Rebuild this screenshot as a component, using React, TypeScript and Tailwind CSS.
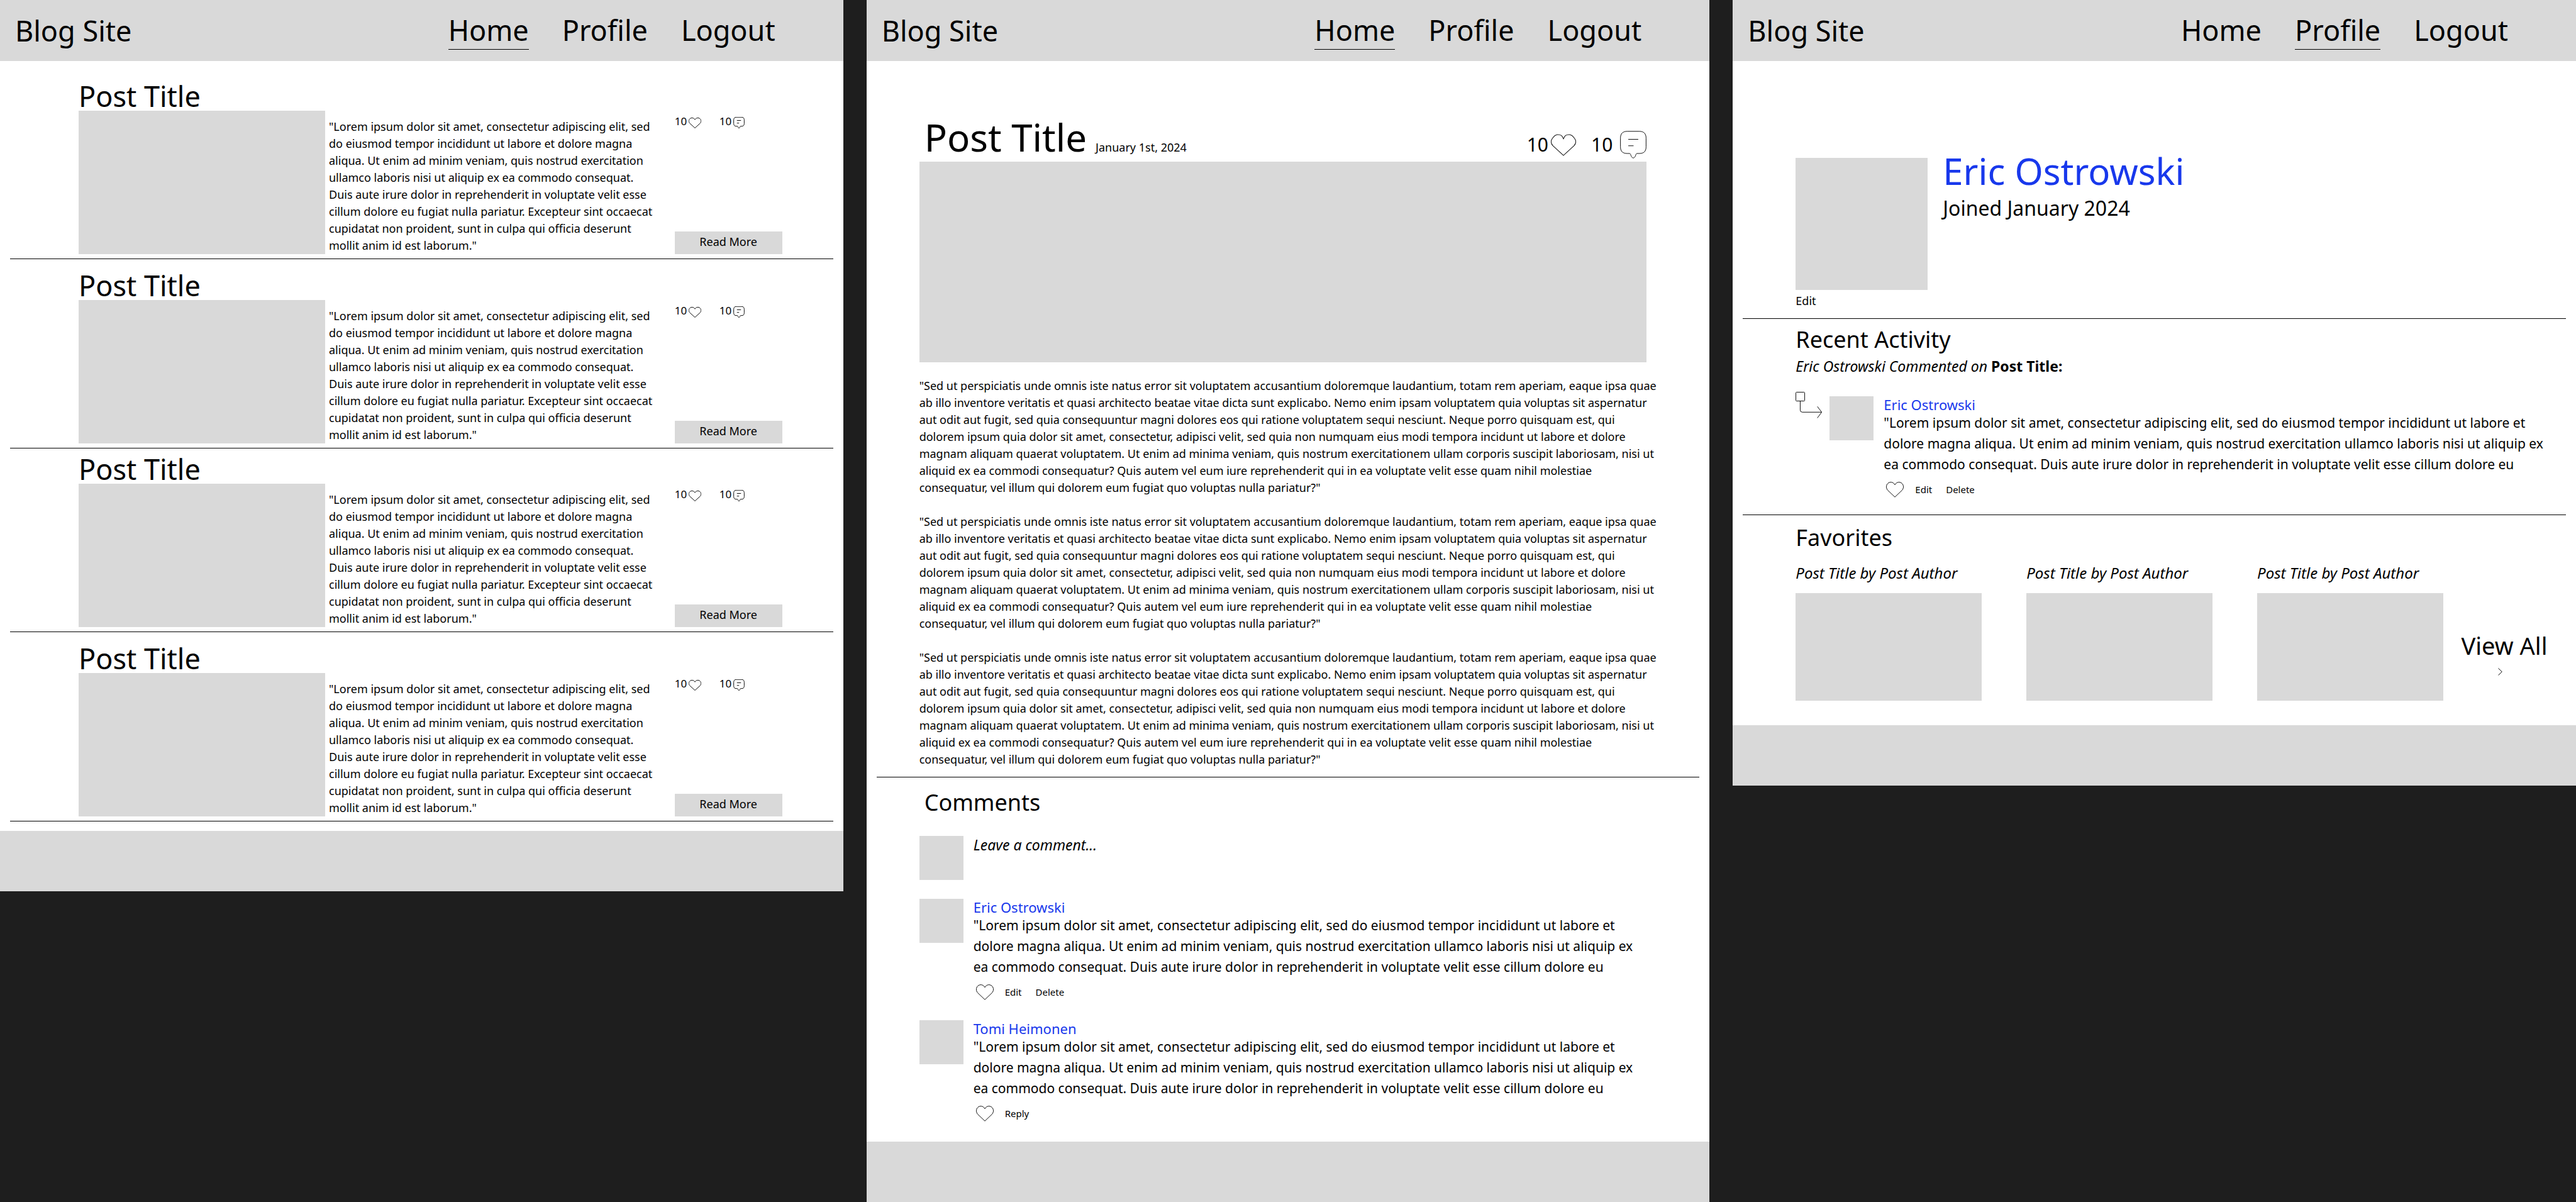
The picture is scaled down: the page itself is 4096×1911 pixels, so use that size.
import React from "react";

const EXCERPT = [
  '"Lorem ipsum dolor sit amet, consectetur adipiscing elit, sed',
  "do eiusmod tempor incididunt ut labore et dolore magna",
  "aliqua. Ut enim ad minim veniam, quis nostrud exercitation",
  "ullamco laboris nisi ut aliquip ex ea commodo consequat.",
  "Duis aute irure dolor in reprehenderit in voluptate velit esse",
  "cillum dolore eu fugiat nulla pariatur. Excepteur sint occaecat",
  "cupidatat non proident, sunt in culpa qui officia deserunt",
  'mollit anim id est laborum."',
];

const BODY = [
  '"Sed ut perspiciatis unde omnis iste natus error sit voluptatem accusantium doloremque laudantium, totam rem aperiam, eaque ipsa quae',
  "ab illo inventore veritatis et quasi architecto beatae vitae dicta sunt explicabo. Nemo enim ipsam voluptatem quia voluptas sit aspernatur",
  "aut odit aut fugit, sed quia consequuntur magni dolores eos qui ratione voluptatem sequi nesciunt. Neque porro quisquam est, qui",
  "dolorem ipsum quia dolor sit amet, consectetur, adipisci velit, sed quia non numquam eius modi tempora incidunt ut labore et dolore",
  "magnam aliquam quaerat voluptatem. Ut enim ad minima veniam, quis nostrum exercitationem ullam corporis suscipit laboriosam, nisi ut",
  "aliquid ex ea commodi consequatur? Quis autem vel eum iure reprehenderit qui in ea voluptate velit esse quam nihil molestiae",
  'consequatur, vel illum qui dolorem eum fugiat quo voluptas nulla pariatur?"',
];

const COMMENT = [
  '"Lorem ipsum dolor sit amet, consectetur adipiscing elit, sed do eiusmod tempor incididunt ut labore et',
  "dolore magna aliqua. Ut enim ad minim veniam, quis nostrud exercitation ullamco laboris nisi ut aliquip ex",
  "ea commodo consequat. Duis aute irure dolor in reprehenderit in voluptate velit esse cillum dolore eu",
];

function Lines({ lines }: { lines: string[] }) {
  return (
    <>
      {lines.map((line) => (
        <span key={line} className="block whitespace-nowrap">
          {line}
        </span>
      ))}
    </>
  );
}

const stroke = {
  fill: "none",
  stroke: "#111111",
  strokeWidth: 1,
  vectorEffect: "non-scaling-stroke" as const,
};

function Heart({ className }: { className: string }) {
  return (
    <svg viewBox="0 0 30 27" className={className} preserveAspectRatio="none" aria-hidden="true">
      <path
        {...stroke}
        d="M15 26.2 L2.9 14.6 C-.4 11.1 -.2 5.8 2.9 2.8 C6.3 -.4 12.2 -.2 15 5.2 C17.8 -.2 23.7 -.4 27.1 2.8 C30.2 5.8 30.4 11.1 27.1 14.6 Z"
      />
    </svg>
  );
}

function WideHeart({ className }: { className: string }) {
  return (
    <svg viewBox="0 0 43 37" className={className} aria-hidden="true">
      <path
        {...stroke}
        d="M21.5 36.3 L3.4 19.8 C-.2 15.8 -.3 11.2 2.4 7.4 C5 3.6 7.2 .7 11.6 .7 C17.5 .7 19.2 2.6 21.5 8 C23.8 2.6 25.5 .7 31.4 .7 C35.8 .7 38 3.6 40.6 7.4 C43.3 11.2 43.2 15.8 39.6 19.8 Z"
      />
    </svg>
  );
}

function Bubble({ className }: { className: string }) {
  return (
    <svg viewBox="0 0 45 47" className={className} aria-hidden="true">
      <path
        {...stroke}
        d="M12 .8 H33 C40.5 .8 44.3 4.8 44.3 12 V27.5 C44.3 34.8 40.5 38.5 33 38.5 H30 C26.5 38.5 27.5 40 26 43 C24 47.2 21 47.2 19 43 C17.5 40 18.5 38.5 15 38.5 H12 C4.5 38.5 .7 34.8 .7 27.5 V12 C.7 4.8 4.5 .8 12 .8 Z"
      />
      <path {...stroke} d="M14 14.4 H31 M14 25.4 H23" />
    </svg>
  );
}

function ReplyArrow() {
  return (
    <svg viewBox="0 0 45 45" className="size-[42px] shrink-0" aria-hidden="true">
      <rect {...stroke} x="0.6" y="0.6" width="15" height="15" rx="1" />
      <path {...stroke} d="M8 15.6 V31 Q8 34.6 11.6 34.6 H44.6 M37.2 25 L44.6 34.6 L37.2 44.4" />
    </svg>
  );
}

function Header({ current }: { current: string }) {
  return (
    <header className="flex h-[97px] items-center justify-between bg-[#d9d9d9] pr-[108px] pl-6">
      <span className="text-[45px] leading-[60px]">Blog Site</span>
      <nav className="flex gap-[53px] text-[45px] leading-[60px]">
        {["Home", "Profile", "Logout"].map((item) => (
          <a
            key={item}
            href="#"
            className={item === current ? "border-b border-black" : "border-b border-transparent"}
          >
            {item}
          </a>
        ))}
      </nav>
    </header>
  );
}

function Footer() {
  return <footer className="h-24 bg-[#d9d9d9]" />;
}

function Rule() {
  return <hr className="mx-4 border-t border-black" />;
}

function PostPreview({ spacing }: { spacing: string }) {
  return (
    <article>
      <div className={`${spacing} pr-[97px] pb-[7px] pl-[125px]`}>
        <h2 className="text-[45px] leading-[46px]">Post Title</h2>
        <div className="flex">
          <div className="h-[228px] w-[392px] shrink-0 bg-[#d9d9d9]" />
          <p className="ml-1.5 flex-1 self-end text-[18px] leading-[27px]">
            <Lines lines={EXCERPT} />
          </p>
          <div className="flex w-[171px] shrink-0 flex-col justify-between pt-1.5">
            <div className="flex text-[17px] leading-[22px]">
              <div className="flex w-[71px] items-end gap-[3px]">
                10
                <Heart className="h-[17px] w-5" />
              </div>
              <div className="flex items-end gap-[3px]">
                10
                <Bubble className="h-[18px] w-[18px]" />
              </div>
            </div>
            <button className="h-9 bg-[#d9d9d9] pb-[3px] text-[18px] leading-[27px]">Read More</button>
          </div>
        </div>
      </div>
      <Rule />
    </article>
  );
}

function Comment({ author, actions }: { author: string; actions: string[] }) {
  return (
    <article className="flex gap-4">
      <div className="size-[70px] shrink-0 bg-[#d9d9d9]" />
      <div>
        <a href="#" className="block text-[22px] leading-[26px] text-[#1838ec]">
          {author}
        </a>
        <p className="text-[21px] leading-[33px]">
          <Lines lines={COMMENT} />
        </p>
        <div className="mt-[11px] ml-1 flex items-center text-[15px] leading-[25px]">
          <button aria-label="Like" className="mr-[18px]">
            <Heart className="h-[25px] w-7" />
          </button>
          <div className="flex gap-[22px]">
            {actions.map((action) => (
              <button key={action}>{action}</button>
            ))}
          </div>
        </div>
      </div>
    </article>
  );
}

function HomePage() {
  return (
    <section className="bg-white">
      <Header current="Home" />
      <main className="pb-[15px]">
        <PostPreview spacing="pt-[33px]" />
        <PostPreview spacing="pt-[19px]" />
        <PostPreview spacing="pt-[10px]" />
        <PostPreview spacing="pt-[19px]" />
      </main>
      <Footer />
    </section>
  );
}

function PostPage() {
  return (
    <section className="bg-white">
      <Header current="Home" />
      <main>
        <div className="pt-[91px] pr-[100px] pb-[14px] pl-[84px]">
          <div className="flex items-end justify-between pb-[5px]">
            <div className="mb-1 flex items-baseline gap-[14px] pl-2">
              <h1 className="text-[60px] leading-[60px]">Post Title</h1>
              <time className="text-[18px]">January 1st, 2024</time>
            </div>
            <div className="flex items-center text-[30px] leading-[44px]">
              10
              <WideHeart className="ml-1 h-[35px] w-10" />
              <span className="ml-6">10</span>
              <Bubble className="ml-3 h-11 w-[42px]" />
            </div>
          </div>
          <div className="h-[319px] bg-[#d9d9d9]" />
          <div className="flex flex-col gap-[27px] pt-6 text-[18px] leading-[27px]">
            <p>
              <Lines lines={BODY} />
            </p>
            <p>
              <Lines lines={BODY} />
            </p>
            <p>
              <Lines lines={BODY} />
            </p>
          </div>
        </div>
        <Rule />
        <div className="px-[84px] pt-4 pb-8">
          <h2 className="pl-2 text-[36px] leading-[48px]">Comments</h2>
          <form className="mt-[29px] mb-[30px] flex gap-4">
            <div className="size-[70px] shrink-0 bg-[#d9d9d9]" />
            <input
              aria-label="Leave a comment"
              placeholder="Leave a comment..."
              className="h-7 flex-1 text-[23px] italic placeholder:text-black"
            />
          </form>
          <div className="flex flex-col gap-8">
            <Comment author="Eric Ostrowski" actions={["Edit", "Delete"]} />
            <Comment author="Tomi Heimonen" actions={["Reply"]} />
          </div>
        </div>
      </main>
      <Footer />
    </section>
  );
}

function ProfilePage() {
  return (
    <section className="bg-white">
      <Header current="Profile" />
      <main>
        <div className="pt-[154px] pb-[14px] pl-[100px]">
          <div className="flex gap-6">
            <div className="size-[210px] shrink-0 bg-[#d9d9d9]" />
            <div>
              <h1 className="text-[58px] leading-[42px] text-[#1838ec]">Eric Ostrowski</h1>
              <p className="mt-[14px] text-[32px] leading-[48px]">Joined January 2024</p>
            </div>
          </div>
          <button className="mt-1 block text-[18px] leading-[27px]">Edit</button>
        </div>
        <Rule />
        <div className="pt-[9px] pb-[27px] pl-[100px]">
          <h2 className="text-[36px] leading-[48px]">Recent Activity</h2>
          <p className="mt-0.5 text-[23px] leading-[33px]">
            <em>Eric Ostrowski Commented on</em> <strong>Post Title:</strong>
          </p>
          <div className="mt-6 flex gap-3">
            <ReplyArrow />
            <div className="pt-[7px]">
              <Comment author="Eric Ostrowski" actions={["Edit", "Delete"]} />
            </div>
          </div>
        </div>
        <Rule />
        <div className="pt-3 pr-11 pb-[39px] pl-[100px]">
          <h2 className="text-[36px] leading-[48px]">Favorites</h2>
          <div className="mt-[15px] flex">
            <ul className="grid flex-1 grid-cols-3 gap-[71px]">
              {[1, 2, 3].map((id) => (
                <li key={id}>
                  <p className="text-[24px] leading-[33px] italic">Post Title by Post Author</p>
                  <div className="mt-4 h-[171px] bg-[#d9d9d9]" />
                </li>
              ))}
            </ul>
            <a
              href="#"
              className="mb-10 ml-[27px] flex w-[140px] shrink-0 flex-col items-center self-end text-[38px] leading-[48px] whitespace-nowrap"
            >
              View All
              <svg viewBox="0 0 7 12" className="mt-3 mr-3 h-3 w-[7px]" aria-hidden="true">
                <path {...stroke} d="M.5 .5 L6.3 6 L.5 11.5" />
              </svg>
            </a>
          </div>
        </div>
      </main>
      <Footer />
    </section>
  );
}

export default function App() {
  return (
    <div className="grid min-h-screen grid-cols-3 items-start gap-[37px] bg-[#1e1e1e] font-['Noto_Sans',sans-serif] text-black">
      <HomePage />
      <PostPage />
      <ProfilePage />
    </div>
  );
}
